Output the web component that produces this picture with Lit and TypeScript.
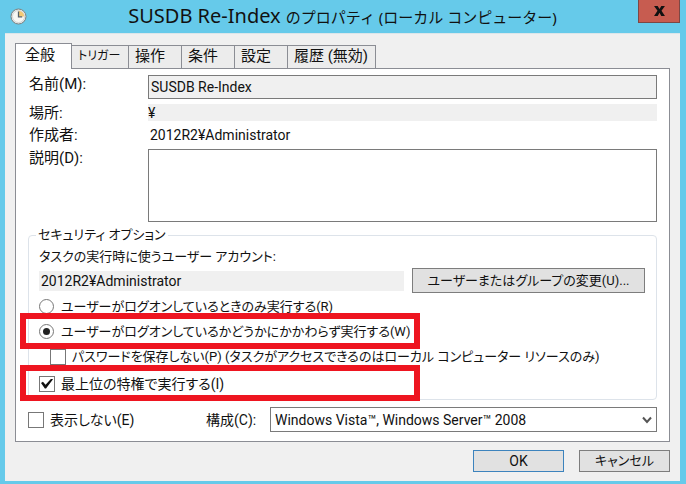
import { LitElement, html, css } from "lit";
import { customElement, state } from "lit/decorators.js";

const TABS = ["全般", "トリガー", "操作", "条件", "設定", "履歴 (無効)"];

@customElement("app-root")
export class AppRoot extends LitElement {
  @state() private tab = 0;

  static styles = css`
    :host {
      display: flex;
      flex-direction: column;
      min-height: 100vh;
      box-sizing: border-box;
      padding: 0 6px 3px 5px;
      background: #66caea;
      color: #111;
      font: 13px/18px Roboto, "Noto Sans CJK JP", sans-serif;
      font-feature-settings: "palt";
    }
    *,
    *::after {
      box-sizing: border-box;
    }
    button,
    input,
    textarea,
    select {
      font: inherit;
      font-feature-settings: inherit;
      color: inherit;
      margin: 0;
      border-radius: 0;
    }
    .titlebar {
      display: grid;
      grid-template-columns: 42px 1fr 42px;
      height: 33px;
    }
    .clock {
      align-self: center;
      margin-left: 5px;
    }
    .title {
      margin: 0;
      text-align: center;
      white-space: nowrap;
      font: 15px/32px "Noto Sans", "Noto Sans CJK JP", sans-serif;
    }
    .task {
      font-size: 20px;
    }
    .close {
      height: 23px;
      padding: 0;
      border: 1px solid #7d4744;
      border-top: 0;
      background: #c75c50;
      display: grid;
      place-items: center;
    }
    .body {
      flex: 1;
      display: flex;
      flex-direction: column;
      padding: 9px 10px 9px;
      background: #f0f0f0;
      border: 1px solid #dbe6ea;
      border-width: 1px 0 0;
    }
    .tabs {
      display: flex;
      align-items: flex-end;
    }
    .tab {
      height: 23px;
      padding: 0 7px 2px 6px;
      border: 1px solid #8b8d94;
      border-width: 1px 1px 0 0;
      background: #ececec;
      text-align: left;
      min-width: 53px;
      white-space: nowrap;
      font-size: 15px;
    }
    .tab:nth-child(2) {
      min-width: 57px;
      font-size: 12px;
    }
    .tab.on {
      height: 26px;
      margin-bottom: -1px;
      padding: 0 9px 4px;
      min-width: 57px;
      border-left-width: 1px;
      background: #fff;
      position: relative;
    }
    .panel {
      flex: 1;
      padding: 6px 12px 9px;
      border: 1px solid #8b8d94;
      background: #fff;
    }
    .general {
      display: grid;
      grid-template-columns: 119px minmax(0, 1fr);
      grid-template-rows: 24px 17px 18px 73px;
      gap: 5px 0;
      padding-left: 1px;
      font-size: 15px;
    }
    .latin {
      font-size: 14px;
    }
    .kanji {
      font-size: 14px;
    }
    .field {
      width: 100%;
      padding: 0 2px;
      border: 1px solid #7a7a7a;
      background: #f0f0f0;
      outline: none;
    }
    .plain {
      border: 0;
      padding: 0;
    }
    .author {
      padding-left: 2px;
    }
    .desc {
      resize: none;
      background: #fff;
      display: block;
    }
    .security {
      min-width: 0;
      margin: 4px 0 0;
      padding: 4px 10px 3px;
      border: 1px solid #dde3ea;
      border-radius: 4px;
    }
    .security legend {
      margin-left: -3px;
      padding: 0 2px;
    }
    .account {
      display: flex;
      gap: 8px;
      align-items: center;
      height: 25px;
      margin: 2px 1px 1px 0;
    }
    .account .field {
      flex: 1;
      min-width: 0;
      height: 20px;
      padding: 0 2px;
    }
    .btn {
      border: 1px solid #7d7d7d;
      background: #e1e1e1;
      padding: 0 4px;
      white-space: nowrap;
    }
    .change {
      width: 233px;
      height: 25px;
    }
    .option {
      position: relative;
      display: flex;
      align-items: center;
      height: 25px;
      white-space: nowrap;
    }
    .option label {
      padding-left: 6px;
    }
    .sub {
      padding-left: 11px;
    }
    .top {
      margin-top: 2px;
    }
    .marked {
      z-index: 1;
    }
    .marked::after {
      content: "";
      position: absolute;
      left: -19px;
      top: -6px;
      width: 400px;
      height: 36px;
      border: 6px solid #ee1520;
      pointer-events: none;
    }
    .radio,
    .check {
      appearance: none;
      flex: none;
      display: grid;
      place-items: center;
      width: 16px;
      height: 16px;
      border: 1px solid #777;
      background: #fff;
    }
    .radio {
      width: 15px;
      height: 15px;
      margin-right: 1px;
      border-radius: 50%;
    }
    .radio:checked::before {
      content: "";
      width: 7px;
      height: 7px;
      border-radius: 50%;
      background: #222;
    }
    .check:checked::before {
      content: "";
      width: 12px;
      height: 10px;
      background: #111;
      clip-path: polygon(0 45%, 16% 32%, 38% 62%, 86% 0, 100% 8%, 42% 100%, 32% 100%);
    }
    .bottom {
      display: flex;
      align-items: center;
      height: 25px;
      margin-top: 7px;
      white-space: nowrap;
    }
    .hide {
      flex: none;
      width: 162px;
      padding-left: 6px;
    }
    .conf {
      flex: none;
      width: 64px;
    }
    .combo {
      flex: 1;
      min-width: 0;
      height: 25px;
      display: grid;
    }
    .combo > * {
      grid-area: 1 / 1;
    }
    .combo select {
      appearance: none;
      width: 100%;
      padding: 0 24px 0 4px;
      border: 1px solid #7a7a7a;
      background: #fff;
    }
    .arrow {
      place-self: center end;
      margin-right: 5px;
      pointer-events: none;
    }
    .actions {
      display: flex;
      justify-content: flex-end;
      gap: 15px;
      margin-top: 8px;
    }
    .action {
      width: 91px;
      height: 22px;
    }
    .ok {
      border-color: #3c83bd;
      font-size: 14px;
    }
  `;

  render() {
    return html`
      <header class="titlebar">
        <svg class="clock" width="17" height="17" viewBox="0 0 17 17" aria-hidden="true">
          <circle cx="8.5" cy="8.5" r="7.5" fill="#e9eced" stroke="#7b817f" />
          <circle cx="8.5" cy="8.5" r="6" fill="#f8f8f4" stroke="#c9cccb" stroke-width=".7" />
          <path d="M8.5 8.5V2.8a5.7 5.7 0 0 1 5.7 5.7Z" fill="#f3ca76" />
          <path d="M8.5 3.5v5.3h3.7" fill="none" stroke="#56616a" stroke-width="1.3" />
        </svg>
        <h1 class="title"><span class="task">SUSDB Re-Index </span>のプロパティ (ローカル コンピューター)</h1>
        <button class="close" aria-label="閉じる">
          <svg width="11" height="10" viewBox="0 0 12 11">
            <path d="M0 0h4l2 3.4L8 0h4L8.2 5.3 12 11H8L6 7.3 4 11H0l3.8-5.7Z" fill="#111" />
          </svg>
        </button>
      </header>
      <main class="body">
        <div class="tabs" role="tablist">
          ${TABS.map(
            (name, i) => html`<button
              class="tab ${i === this.tab ? "on" : ""}"
              role="tab"
              aria-selected=${i === this.tab}
              @click=${() => (this.tab = i)}
            >${name}</button>`
          )}
        </div>
        <section class="panel">
          <div class="general">
            <label for="name">名前(M):</label>
            <input id="name" class="field latin" readonly value="SUSDB Re-Index" />
            <label for="place">場所:</label>
            <input id="place" class="field plain latin" readonly value="¥" />
            <span>作成者:</span>
            <span class="author latin">2012R2¥Administrator</span>
            <label for="desc">説明(D):</label>
            <textarea id="desc" class="field desc"></textarea>
          </div>
          <fieldset class="security">
            <legend>セキュリティ オプション</legend>
            <label for="account">タスクの実行時に使うユーザー アカウント:</label>
            <div class="account">
              <input id="account" class="field plain latin" readonly value="2012R2¥Administrator" />
              <button class="btn change">ユーザーまたはグループの変更(U)...</button>
            </div>
            <div class="option">
              <input class="radio" type="radio" name="logon" id="logged" />
              <label for="logged">ユーザーがログオンしているときのみ実行する(R)</label>
            </div>
            <div class="option marked">
              <input class="radio" type="radio" name="logon" id="always" checked />
              <label for="always">ユーザーがログオンしているかどうかにかかわらず実行する(W)</label>
            </div>
            <div class="option sub">
              <input class="check" type="checkbox" id="nopass" />
              <label for="nopass">パスワードを保存しない(P) (タスクがアクセスできるのはローカル コンピューター リソースのみ)</label>
            </div>
            <div class="option top marked">
              <input class="check" type="checkbox" id="highest" checked />
              <label class="kanji" for="highest">最上位の特権で実行する(I)</label>
            </div>
          </fieldset>
          <div class="bottom">
            <input class="check" type="checkbox" id="hidden" />
            <label class="hide kanji" for="hidden">表示しない(E)</label>
            <label class="conf kanji" for="config">構成(C):</label>
            <div class="combo">
              <select id="config" class="latin">
                <option>Windows Vista™, Windows Server™ 2008</option>
              </select>
              <svg class="arrow" width="10" height="8" viewBox="0 0 10 8" aria-hidden="true">
                <path d="M1 1.5 5 6l4-4.5" fill="none" stroke="#555" stroke-width="2" />
              </svg>
            </div>
          </div>
        </section>
        <footer class="actions">
          <button class="btn action ok">OK</button>
          <button class="btn action">キャンセル</button>
        </footer>
      </main>
    `;
  }
}
